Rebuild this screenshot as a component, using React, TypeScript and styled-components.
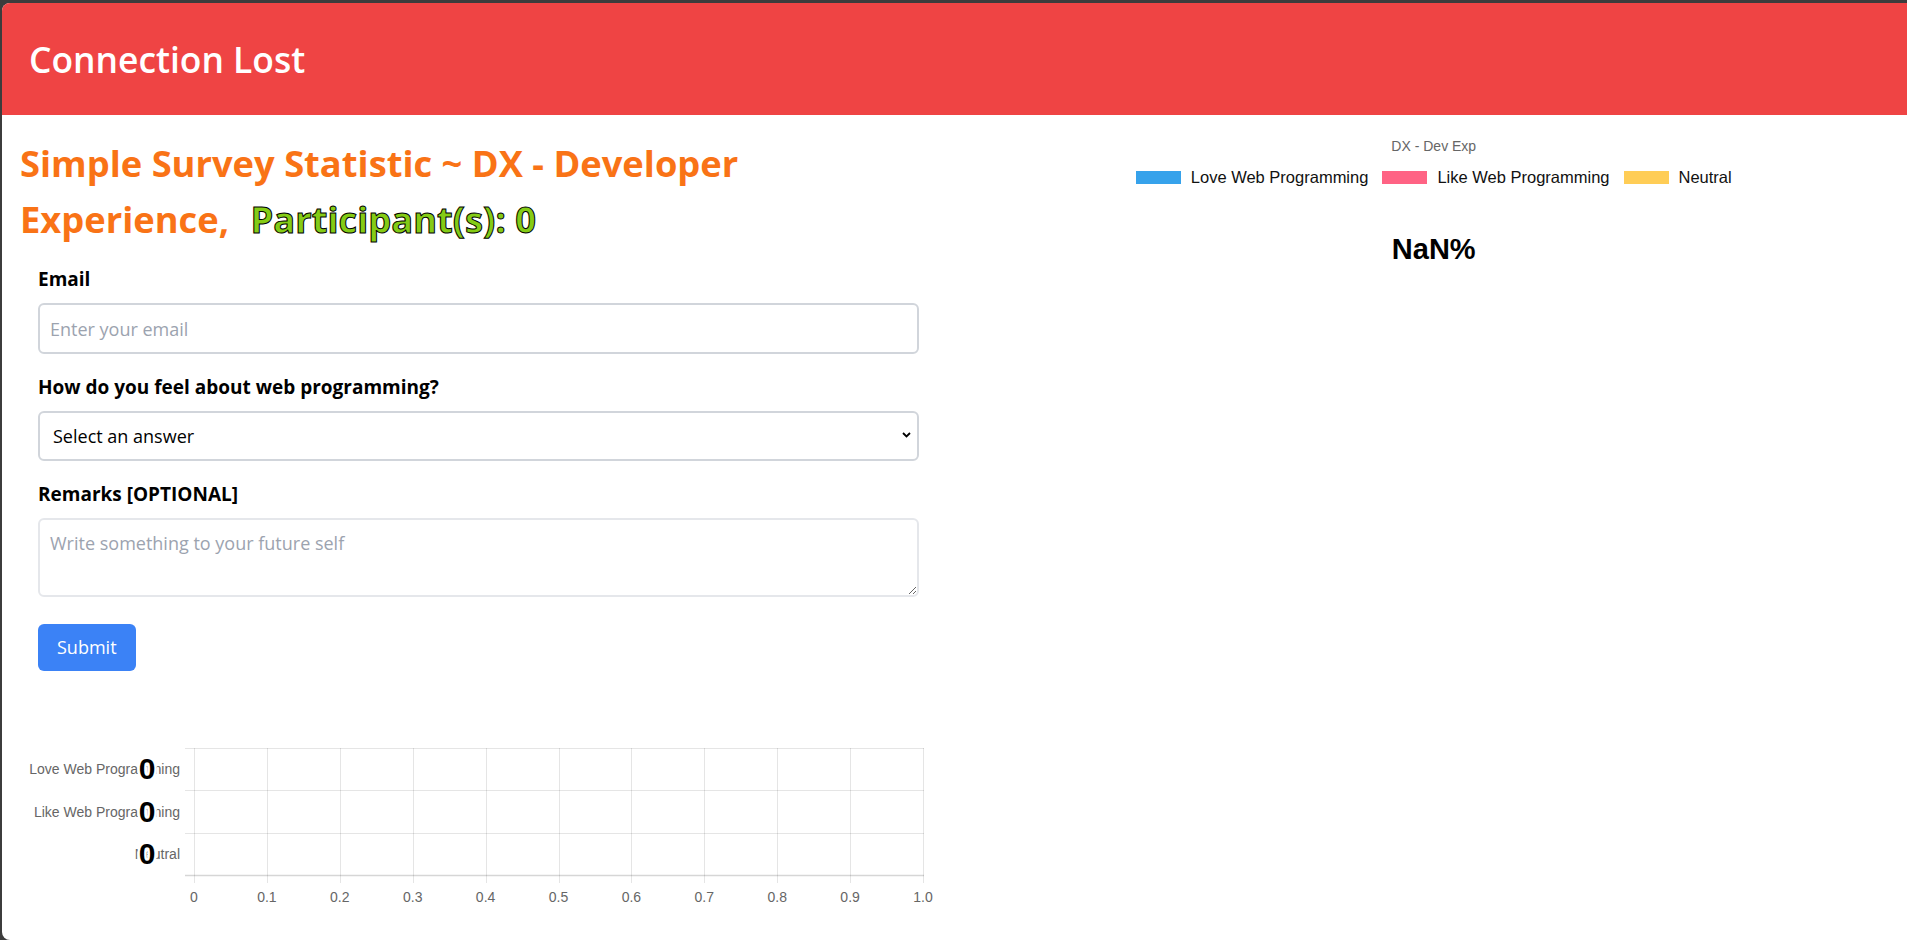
import React from "react";
import styled, { createGlobalStyle } from "styled-components";

const GlobalStyle = createGlobalStyle`
  html, body {
    margin: 0;
    padding: 0;
    background: #3c3c3c;
  }
  body {
    font-family: "Open Sans", "Noto Sans", sans-serif;
  }
  * { box-sizing: border-box; }
`;

const Frame = styled.div`
  margin: 3px 0 0 2px;
  height: 937px;
  background: #ffffff;
  border-radius: 8px 0 0 8px;
  overflow: hidden;
  font-family: "Open Sans", "Noto Sans", sans-serif;
`;

const Header = styled.header`
  height: 112px;
  background: #ef4444;
  display: flex;
  align-items: center;
  padding-left: 27px;
`;

const HeaderTitle = styled.h1`
  margin: 0;
  color: #ffffff;
  font-size: 35.4px;
  font-weight: 600;
`;

const Main = styled.main`
  display: grid;
  grid-template-columns: 1fr 1fr;
`;

const LeftCol = styled.section`
  padding: 20px 18px 0;
  min-width: 0;
`;

const Title = styled.h2`
  margin: 0;
  max-width: 860px;
  font-size: 36.3px;
  line-height: 56px;
  font-weight: 700;
  color: #f97316;
`;

const Participants = styled.span`
  color: #84cc16;
  -webkit-text-stroke: 1px #000;
  margin-left: 12px;
`;

const Form = styled.form`
  padding: 19px 18px 0;
  display: flex;
  flex-direction: column;
`;

const Field = styled.div`
  display: flex;
  flex-direction: column;
  gap: 10px;
  margin-bottom: 20px;
`;

const Label = styled.label`
  font-size: 19px;
  line-height: 27px;
  font-weight: 700;
  color: #000;
`;

const fieldBase = `
  width: 100%;
  border-radius: 6px;
  font-family: "Open Sans", "Noto Sans", sans-serif;
  font-size: 18px;
  color: #000;
  background: #fff;
  outline: none;
`;

const TextInput = styled.input`
  ${fieldBase}
  height: 51px;
  border: 2px solid #d1d5db;
  padding: 0 10px;
  &::placeholder {
    color: #9ca3af;
  }
`;

const SelectWrap = styled.div`
  position: relative;
`;

const Select = styled.select`
  ${fieldBase}
  appearance: none;
  -webkit-appearance: none;
  height: 50px;
  border: 2px solid #d1d5db;
  padding: 0 30px 0 13px;
`;

const Chevron = styled.svg`
  position: absolute;
  right: 8px;
  top: 21px;
  pointer-events: none;
`;

const TextArea = styled.textarea`
  ${fieldBase}
  height: 79px;
  border: 2px solid #e5e7eb;
  padding: 10px;
  line-height: 27px;
  resize: vertical;
  &::placeholder {
    color: #9ca3af;
  }
`;

const SubmitButton = styled.button`
  align-self: flex-start;
  margin-top: 7px;
  padding: 10px 19px;
  border: none;
  border-radius: 6px;
  background: #3b82f6;
  color: #fff;
  font-family: "Open Sans", "Noto Sans", sans-serif;
  font-size: 18px;
  line-height: 27px;
  cursor: pointer;
`;

const BarChartSvg = styled.svg`
  display: block;
  margin-top: 59px;
`;

const RightCol = styled.section`
  padding: 23px 0 0 6px;
  display: flex;
  flex-direction: column;
  align-items: center;
  font-family: "Liberation Sans", Arial, sans-serif;
`;

const ChartTitle = styled.div`
  font-size: 14px;
  line-height: 16px;
  color: #666;
`;

const Legend = styled.div`
  display: flex;
  align-items: center;
  gap: 14px;
  margin-top: 14px;
`;

const LegendItem = styled.div`
  display: flex;
  align-items: center;
  gap: 10px;
  font-size: 16.5px;
  line-height: 18px;
  color: #111;
`;

const LegendBox = styled.span<{ $color: string }>`
  display: block;
  width: 45px;
  height: 13px;
  background: ${(p) => p.$color};
`;

const Percent = styled.div`
  margin-top: 46px;
  font-size: 29px;
  line-height: 34px;
  font-weight: 700;
  color: #000;
`;

const categories = ["Love Web Programming", "Like Web Programming", "Neutral"];
const legend = [
  { label: "Love Web Programming", color: "#36A2EB" },
  { label: "Like Web Programming", color: "#FF6384" },
  { label: "Neutral", color: "#FFCD56" },
];

function BarChart() {
  const X0 = 194;
  const X1 = 923;
  const Y0 = 748;
  const Y1 = 875;
  const rowH = (Y1 - Y0) / 3;
  const ticks = Array.from({ length: 11 }, (_, i) => i);
  return (
    <BarChartSvg width={916} height={185} viewBox="20 730 916 185">
      {ticks.map((i) => {
        const x = Math.round(X0 + (i * (X1 - X0)) / 10) + 0.5;
        return (
          <line key={"v" + i} x1={x} x2={x} y1={Y0} y2={Y1 + 8} stroke="rgba(0,0,0,0.1)" strokeWidth={1} />
        );
      })}
      {[0, 1, 2, 3].map((j) => {
        const y = Math.round(Y0 + j * rowH) + 0.5;
        return (
          <line
            key={"h" + j}
            x1={185}
            x2={X1 + 1}
            y1={y}
            y2={y}
            stroke={j === 3 ? "rgba(0,0,0,0.16)" : "rgba(0,0,0,0.1)"}
            strokeWidth={j === 3 ? 1.5 : 1}
          />
        );
      })}
      {ticks.map((i) => {
        const x = X0 + (i * (X1 - X0)) / 10;
        const label = i === 0 ? "0" : i === 10 ? "1.0" : (i / 10).toFixed(1);
        return (
          <text
            key={"t" + i}
            x={x}
            y={902}
            textAnchor="middle"
            fontSize={14}
            fontFamily='"Liberation Sans", Arial, sans-serif'
            fill="#666"
          >
            {label}
          </text>
        );
      })}
      {categories.map((c, j) => {
        const cy = Y0 + j * rowH + rowH / 2;
        return (
          <g key={c}>
            <text
              x={180}
              y={cy + 5}
              textAnchor="end"
              fontSize={14}
              fontFamily='"Liberation Sans", Arial, sans-serif'
              fill="#666"
            >
              {c}
            </text>
            <text
              x={147}
              y={cy + 10}
              textAnchor="middle"
              fontSize={30}
              fontWeight={700}
              fontFamily='"Liberation Sans", Arial, sans-serif'
              fill="#000"
              stroke="#fff"
              strokeWidth={5}
              paintOrder="stroke"
            >
              0
            </text>
          </g>
        );
      })}
    </BarChartSvg>
  );
}

export default function App() {
  return (
    <>
      <GlobalStyle />
      <Frame>
        <Header>
          <HeaderTitle>Connection Lost</HeaderTitle>
        </Header>
        <Main>
          <LeftCol>
            <Title>
              Simple Survey Statistic ~ DX - Developer Experience,{" "}
              <Participants>Participant(s): 0</Participants>
            </Title>
            <Form onSubmit={(e) => e.preventDefault()}>
              <Field>
                <Label htmlFor="email">Email</Label>
                <TextInput id="email" type="email" placeholder="Enter your email" />
              </Field>
              <Field>
                <Label htmlFor="feel">How do you feel about web programming?</Label>
                <SelectWrap>
                  <Select id="feel" defaultValue="">
                    <option value="">Select an answer</option>
                    <option value="love">Love Web Programming</option>
                    <option value="like">Like Web Programming</option>
                    <option value="neutral">Neutral</option>
                  </Select>
                  <Chevron width="9" height="6" viewBox="0 0 9 6">
                    <polyline points="1,1 4.5,4.5 8,1" fill="none" stroke="#000" strokeWidth="1.8" />
                  </Chevron>
                </SelectWrap>
              </Field>
              <Field>
                <Label htmlFor="remarks">Remarks [OPTIONAL]</Label>
                <TextArea id="remarks" placeholder="Write something to your future self" />
              </Field>
              <SubmitButton type="submit">Submit</SubmitButton>
            </Form>
            <BarChart />
          </LeftCol>
          <RightCol>
            <ChartTitle>DX - Dev Exp</ChartTitle>
            <Legend>
              {legend.map((l) => (
                <LegendItem key={l.label}>
                  <LegendBox $color={l.color} />
                  {l.label}
                </LegendItem>
              ))}
            </Legend>
            <Percent>NaN%</Percent>
          </RightCol>
        </Main>
      </Frame>
    </>
  );
}
